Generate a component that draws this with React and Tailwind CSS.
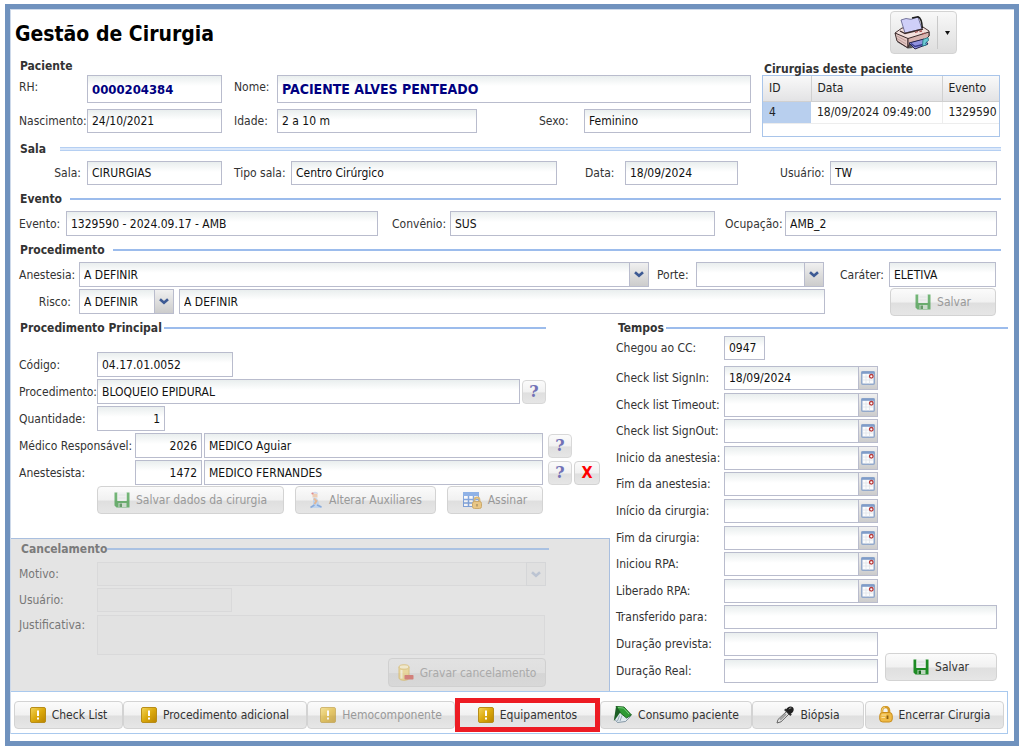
import { useId } from "react"
import clsx from "clsx"

const BEVEL = "bg-[linear-gradient(#fbfbfb_0%,#f1f1f1_50%,#dfdfdf_54%,#e6e6e6_100%)]"

function Field({ label, labelClass, className, ...props }) {
  const id = useId()
  return (
    <>
      <label htmlFor={id} className={clsx("shrink-0 whitespace-nowrap", labelClass)}>
        {label}
      </label>
      <Box id={id} className={className} {...props} />
    </>
  )
}

function Box({ className, ...props }) {
  return (
    <input
      type="text"
      className={clsx(
        "h-6 min-w-0 border border-[#b9bccd] bg-[linear-gradient(#e9eeee,#ffffff_10px)] px-1 text-[#111]",
        className
      )}
      {...props}
    />
  )
}

function Combo({ id, value, className, disabled }) {
  return (
    <span className={clsx("relative flex min-w-0", disabled ? "h-6" : "h-[25px]", className)}>
      <select
        id={id}
        disabled={disabled}
        defaultValue={value}
        className={clsx(
          "w-full appearance-none border px-1",
          disabled ? "border-[#d9d9da] bg-[#e2e2e2]" : "border-[#b9bccd] bg-[linear-gradient(#e9eeee,#ffffff_10px)] text-[#111]"
        )}
      >
        <option>{value}</option>
      </select>
      <span
        className={clsx(
          "pointer-events-none absolute inset-y-0 right-0 flex w-5 items-center justify-center border",
          disabled ? "border-[#d5d6d8] bg-[#e0e0e0] text-[#bcc4d2]" : "border-[#b9bccd] bg-linear-to-b from-[#f0f0f0] to-[#cccccc] text-[#3d5a94]"
        )}
      >
        <svg width="10" height="7" viewBox="0 0 10 7" fill="none" stroke="currentColor" strokeWidth="2.6">
          <path d="M1 1.2 5 4.8 9 1.2" />
        </svg>
      </span>
    </span>
  )
}

function DateField({ label, value = "" }) {
  return (
    <div className="flex items-center">
      <Field label={label} labelClass="w-[108px]" defaultValue={value} className="w-[135px]" />
      <button
        type="button"
        aria-label={"Calendário: " + label}
        className="flex h-6 w-[19px] items-center justify-center border border-l-0 border-[#b9bccd] bg-linear-to-b from-[#f0f0f0] to-[#cccccc]"
      >
        <CalendarIcon />
      </button>
    </div>
  )
}

function Button({ children, className, disabled, icon }) {
  return (
    <button
      type="button"
      disabled={disabled}
      className={clsx(
        "flex h-7 shrink-0 items-center justify-center gap-1.5 whitespace-nowrap rounded-sm border border-[#d3d3d3]",
        BEVEL,
        disabled ? "text-[#999]" : "text-[#333]",
        className
      )}
    >
      {icon && <span className={clsx(disabled && "opacity-60")}>{icon}</span>}
      {children}
    </button>
  )
}

function HelpButton({ label }) {
  return (
    <button
      type="button"
      aria-label={label}
      className={clsx(
        "h-6 w-6 shrink-0 rounded-sm border border-[#d8d8d8] font-['DejaVu_Serif',serif] text-base leading-5 font-bold text-[#7272b6]",
        BEVEL
      )}
    >
      ?
    </button>
  )
}

function Title({ children, className, lineClass = "ml-0.5 h-0.5 bg-[#9cbcec]" }) {
  return (
    <div className={clsx("flex h-4 items-center", className)}>
      <h2 className="text-xs leading-4 font-bold whitespace-nowrap text-[#333]">{children}</h2>
      <div className={clsx("flex-1", lineClass)} />
    </div>
  )
}

function CalendarIcon() {
  return (
    <svg width="14" height="14" viewBox="0 0 14 14">
      <rect x="0.75" y="0.75" width="12.5" height="12.5" rx="1" fill="#fbfcfd" stroke="#93a9cb" strokeWidth="1.5" />
      <path d="M0.500 0.500h13v2.300h-13z" fill="#7f9cc9" />
      <path d="M2 6h10M2 9h10M5 3.500v9M8.500 3.500v9" stroke="#dfe3e9" strokeWidth="0.800" />
      <circle cx="10.300" cy="5.300" r="1.800" fill="#fff" stroke="#b83a3a" strokeWidth="1.300" />
    </svg>
  )
}

function SaveIcon() {
  return (
    <svg width="16" height="16" viewBox="0 0 16 16">
      <path d="M0.500 0.500h3V9h9V0.500h3v15h-13l-2-2z" fill="#1d8b24" />
      <path d="M3.500 0.500h9V9h-9z" fill="#eceeee" />
      <path d="M4.500 3h7M4.500 6h7" stroke="#d6dada" />
      <path d="M4.500 11h8v4h-8z" fill="#bcd6be" />
      <path d="M5.500 11.500h2.500V15H5.500z" fill="#176b1c" />
    </svg>
  )
}

function AlertIcon() {
  return (
    <svg width="16" height="16" viewBox="0 0 16 16">
      <defs>
        <linearGradient id="gold" x1="0" y1="0" x2="1" y2="1">
          <stop offset="0" stopColor="#f3d55b" />
          <stop offset="0.500" stopColor="#dba90c" />
          <stop offset="1" stopColor="#b98400" />
        </linearGradient>
      </defs>
      <rect x="0.5" y="0.5" width="15" height="15" rx="1.500" fill="url(#gold)" stroke="#b88d18" />
      <path d="M7 3.500h2v5.500H7zM7 10.500h2v2H7z" fill="#fff" />
    </svg>
  )
}

function PeopleIcon() {
  return (
    <svg width="14" height="18" viewBox="0 0 14 18">
      <path d="M3.500 2.500h5v4h-5z" fill="#e9b48c" />
      <path d="M3 3C3 0 9 0 9 3L6 2.300z" fill="#b6c6ec" />
      <path d="M4 7c2-1 4-.500 5 2l1 4 3 4H3l1-4z" fill="#a9ccf6" />
      <path d="M5 7.500 7.500 10 5.500 13" stroke="#e39b62" strokeWidth="2" fill="none" />
      <path d="M1.500 16.500 5.500 14M8 14l4.500 2" stroke="#4f86d6" strokeWidth="1.500" />
      <circle cx="3.500" cy="2.500" r="1.100" fill="#d64545" />
    </svg>
  )
}

function SignIcon() {
  return (
    <svg width="19" height="17" viewBox="0 0 19 17">
      <rect x="0.500" y="0.500" width="15" height="14" fill="#fff" stroke="#3c74cf" />
      <path d="M0 0h16v4H0z" fill="#4d86dd" />
      <path d="M1 7.500h14M1 11h14M5.500 4v10M10.500 4v10" stroke="#3c74cf" strokeWidth="1.500" />
      <path d="M11.500 10V8a2.500 2.500 0 0 1 5 0v2" fill="none" stroke="#c8922a" strokeWidth="1.800" />
      <rect x="9.500" y="9.500" width="9" height="7" rx="2" fill="#efb64a" stroke="#bd8520" />
      <path d="M14 12v2.500" stroke="#7d5510" strokeWidth="1.300" />
    </svg>
  )
}

function DatabaseIcon() {
  return (
    <svg width="16" height="17" viewBox="0 0 16 17">
      <path d="M1 3v11c0 3 10 3 10 0V3z" fill="#f0cf6a" stroke="#d6ac3c" />
      <ellipse cx="6" cy="3" rx="5" ry="2.200" fill="#fdf0be" stroke="#d6ac3c" />
      <path d="M3.500 6v8.500" stroke="#fff4cd" strokeWidth="2" />
      <rect x="6.500" y="11" width="9" height="4.500" rx="0.800" fill="#cf3c32" />
    </svg>
  )
}

function BookIcon() {
  return (
    <svg width="19" height="17" viewBox="0 0 19 17">
      <path d="M4 2 2 13.500 4.500 16.500l8-1 5-5z" fill="#dfe8ee" stroke="#6d8494" strokeWidth="0.800" />
      <path d="M3 0.500 11 1l7.500 8-5 3-6-5z" fill="#2f9a35" stroke="#155c1b" strokeWidth="0.900" />
      <path d="M3 0.500 7.500 6 4 11 0.800 15z" fill="#1c5f25" />
      <path d="M6.500 9.500l-2 5.500M9 9.500 7 15" stroke="#8095a6" strokeWidth="0.800" />
      <path d="M5 1.500 10.500 2l5.500 6" fill="none" stroke="#76cf79" />
    </svg>
  )
}

function DropperIcon() {
  return (
    <svg width="18" height="18" viewBox="0 0 18 18">
      <path d="M10.500 5.500 2 13.500 1 17l4-1.200L13 8z" fill="#e6e6e6" stroke="#666" />
      <path d="M10 8 4 13.800" stroke="#a0a0a0" strokeWidth="2" />
      <path d="M8 4 9.800 2.500l6 6L14.300 10z" fill="#333" />
      <path d="M10 4C11 0.800 14.800-.500 16.800 1.300S17.300 7 14 8z" fill="#1f1f1f" />
      <path d="M13 3.200c.600-1 1.500-1.300 2.300-1.200" stroke="#aaa" fill="none" />
    </svg>
  )
}

function LockIcon() {
  return (
    <svg width="14" height="17" viewBox="0 0 14 17">
      <path d="M3 8V4.500a3.500 3.500 0 0 1 7 0V8" fill="none" stroke="#d49b2a" strokeWidth="2.600" />
      <path d="M3 7V4.500a3.500 3.500 0 0 1 3-3.400" fill="none" stroke="#f6dd8a" strokeWidth="0.900" />
      <rect x="0.750" y="6.500" width="12.500" height="9.500" rx="3" fill="#efba45" stroke="#c98d1c" />
      <path d="M2.500 9h5M2.500 11.500h3.500" stroke="#fbe3a0" />
      <path d="M8.500 9.500v3.500" stroke="#8a6012" strokeWidth="1.800" />
    </svg>
  )
}

function PrinterIcon() {
  return (
    <svg width="36" height="34" viewBox="0 0 36 34">
      <path d="M3 26 14 32.500 19 32l-4-5z" fill="#555" />
      <path d="M1 17 8 12l21-1 6 4v5l-5 3-16 4z" fill="#f3e0dd" stroke="#4a3636" />
      <path d="M1 17l13 5.500V32L3 25z" fill="#e3c6c2" stroke="#3b2b2b" />
      <path d="M14 22.500 35 16v4l-3 3-16 4-2 4z" fill="#d8b3af" stroke="#3b2b2b" />
      <path d="M7 4 12 2.500l5 .800L24 1l4 12-17 4z" fill="#cfcff8" stroke="#5a5a88" strokeWidth="0.800" />
      <path d="M18 2l6-1.200c3 1 4 6 4.300 11.200" fill="none" stroke="#1d1d1d" strokeWidth="1.600" />
      <path d="M6 15l5 2.500L29 13" fill="none" stroke="#3b2b2b" strokeWidth="1.300" />
      <path d="M21 16.500l3-1M25.500 15.500l2.500-.500M28 18l3-1" stroke="#a85050" strokeWidth="1.300" />
      <path d="M15 27l15-4 4 5-13 5z" fill="#9193e0" stroke="#26264f" />
      <path d="M17 27.500l4 3 8-2" fill="none" stroke="#383c8a" strokeWidth="1.400" />
      <path d="M29 23.500l5-2 .500 3-3 2.500 1 2-4 1z" fill="#6ccbd4" stroke="#1d6f80" strokeWidth="0.800" />
      <path d="M3 20l9 5M3 22.500l9 5.500" stroke="#b59491" strokeWidth="0.800" />
    </svg>
  )
}

function Header() {
  return (
    <header className="flex h-[45px] items-start justify-between pr-[57px] pl-1">
      <h1 className="pt-2.5 text-[21px] leading-7 font-bold text-black">Gestão de Cirurgia</h1>
      <div className="mt-px flex h-[43px] rounded-sm border border-[#d3d3d3] bg-linear-to-b from-[#f8f8f8] to-[#dedede]">
        <button type="button" aria-label="Imprimir" className="my-1 flex w-[47px] items-center justify-center border-r border-[#c9c9c9] pr-1">
          <PrinterIcon />
        </button>
        <button type="button" aria-label="Opções de impressão" className="flex w-[18px] items-center justify-center">
          <svg width="5" height="4" viewBox="0 0 5 4">
            <path d="M0 0h5L2.500 4z" fill="#111" />
          </svg>
        </button>
      </div>
    </header>
  )
}

function Patient() {
  return (
    <section className="flex gap-[11px] pr-[14px] pl-2">
      <div className="flex-1 pt-[3px]">
        <h2 className="mb-px pl-px text-xs leading-4 font-bold text-[#333]">Paciente</h2>
        <div className="flex items-start">
          <Field label="RH:" labelClass="w-[68px] pt-1" defaultValue="0000204384" className="h-7! w-[135px] text-[13px] font-bold text-[#000080]!" />
          <Field label="Nome:" labelClass="ml-3 w-[43px] pt-1" defaultValue="PACIENTE ALVES PENTEADO" className="h-7! flex-1 text-sm font-bold text-[#000080]!" />
        </div>
        <div className="mt-1.5 flex items-center">
          <Field label="Nascimento:" labelClass="w-[68px]" defaultValue="24/10/2021" className="w-[135px]" />
          <Field label="Idade:" labelClass="ml-3 w-[43px]" defaultValue="2 a 10 m" className="w-[200px]" />
          <Field label="Sexo:" labelClass="ml-[62px] w-[45px]" defaultValue="Feminino" className="flex-1" />
        </div>
      </div>
      <div className="w-[238px] pt-1.5">
        <h2 className="h-3.5 pl-0.5 text-xs leading-4 font-bold whitespace-nowrap text-[#333]">Cirurgias deste paciente</h2>
        <div className="h-[62px] border border-[#a9c5ea]">
          <table className="w-full table-fixed border-collapse text-left text-[#222]">
            <thead>
              <tr className="h-[25px] bg-linear-to-b from-[#f9f9f9] to-[#e3e3e5]">
                <th className="w-12 border-r border-b border-[#d0d0d0] px-1.5 font-normal">ID</th>
                <th className="w-[131px] border-r border-b border-[#d0d0d0] px-1.5 font-normal">Data</th>
                <th className="border-b border-[#d0d0d0] px-1.5 font-normal">Evento</th>
              </tr>
            </thead>
            <tbody>
              <tr className="h-[22px] border-b border-[#ededed]">
                <td className="bg-[#b8cfee] px-1.5">4</td>
                <td className="border-r border-[#ededed] px-1.5 whitespace-nowrap">18/09/2024 09:49:00</td>
                <td className="pl-1.5">1329590</td>
              </tr>
            </tbody>
          </table>
        </div>
      </div>
    </section>
  )
}

function Room() {
  return (
    <section className="pt-1 pr-[13px] pl-[9px]">
      <Title lineClass="ml-3.5 h-1 border-y border-[#b5cff2] bg-[#dbe8fa]">Sala</Title>
      <div className="mt-1 -ml-px flex items-center pr-1">
        <Field label="Sala:" labelClass="w-[68px] pr-1.5 text-right" defaultValue="CIRURGIAS" className="w-[135px]" />
        <Field label="Tipo sala:" labelClass="ml-3 w-[57px]" defaultValue="Centro Cirúrgico" className="flex-1" />
        <Field label="Data:" labelClass="ml-7 w-10" defaultValue="18/09/2024" className="w-[113px]" />
        <Field label="Usuário:" labelClass="ml-[42px] w-[50px]" defaultValue="TW" className="w-[167px]" />
      </div>
    </section>
  )
}

function Event() {
  return (
    <section className="pt-1.5 pr-[13px] pl-[9px]">
      <Title lineClass="ml-2 h-0.5 bg-[#9cbcec]">Evento</Title>
      <div className="mt-1 -ml-px flex items-center pr-1">
        <Field label="Evento:" labelClass="w-[47px]" defaultValue="1329590 - 2024.09.17 - AMB" className="h-[25px]! flex-1" />
        <Field label="Convênio:" labelClass="ml-3.5 w-[58px]" defaultValue="SUS" className="h-[25px]! w-[265px]" />
        <Field label="Ocupação:" labelClass="ml-2.5 w-[60px]" defaultValue="AMB_2" className="h-[25px]! w-[212px]" />
      </div>
    </section>
  )
}

function Procedure() {
  return (
    <section className="pt-1.5 pr-[13px] pl-[9px]">
      <Title lineClass="ml-2 h-0.5 bg-[#9cbcec]">Procedimento</Title>
      <div className="mt-1 -ml-px flex items-center pr-[5px]">
        <label htmlFor="anestesia" className="w-[60px]">Anestesia:</label>
        <Combo id="anestesia" value="A DEFINIR" className="flex-1" />
        <label htmlFor="porte" className="ml-2 w-[39px]">Porte:</label>
        <Combo id="porte" value="" className="w-32" />
        <Field label="Caráter:" labelClass="ml-4 w-[49px]" defaultValue="ELETIVA" className="h-[25px]! w-[107px]" />
      </div>
      <div className="mt-0.5 -ml-px flex h-[25px] items-center pr-[5px]">
        <label htmlFor="risco" className="w-[60px] pr-2 text-right">Risco:</label>
        <Combo id="risco" value="A DEFINIR" className="w-[95px]" />
        <Box aria-label="Descrição do risco" defaultValue="A DEFINIR" className="ml-[5px] h-[25px]! flex-1" />
        <Button disabled icon={<SaveIcon />} className="ml-[65px] w-[106px]">Salvar</Button>
      </div>
    </section>
  )
}

function MainProcedure() {
  return (
    <section className="pl-2">
      <Title className="mr-[64px] pl-px">Procedimento Principal</Title>
      <div className="mt-4 flex flex-col gap-0.5 pr-[10px]">
        <div className="flex items-center">
          <Field label="Código:" labelClass="w-[78px]" defaultValue="04.17.01.0052" className="h-[25px]! w-[136px]" />
        </div>
        <div className="flex items-center pr-[54px]">
          <Field label="Procedimento:" labelClass="w-[78px]" defaultValue="BLOQUEIO EPIDURAL" className="mr-0.5 h-[25px]! flex-1" />
          <HelpButton label="Buscar procedimento" />
        </div>
        <div className="flex items-center">
          <Field label="Quantidade:" labelClass="w-[78px]" defaultValue="1" className="h-[25px]! w-[68px] text-right" />
        </div>
        <div className="flex items-center pr-7">
          <Field label="Médico Responsável:" labelClass="w-[116px]" defaultValue="2026" className="h-[25px]! w-[67px] text-right" />
          <Box aria-label="Nome do médico" defaultValue="MEDICO Aguiar" className="mx-0.5 h-[25px]! flex-1" />
          <span className="ml-[3px] flex"><HelpButton label="Buscar médico" /></span>
        </div>
        <div className="flex items-center">
          <Field label="Anestesista:" labelClass="w-[116px]" defaultValue="1472" className="h-[25px]! w-[67px] text-right" />
          <Box aria-label="Nome do anestesista" defaultValue="MEDICO FERNANDES" className="mx-0.5 h-[25px]! flex-1" />
          <span className="ml-[3px] flex"><HelpButton label="Buscar anestesista" /></span>
          <button
            type="button"
            aria-label="Remover anestesista"
            className={clsx("ml-0.5 h-6 w-[26px] rounded-sm border border-[#d3d3d3] text-base leading-5 font-bold text-[#f00]", BEVEL)}
          >
            X
          </button>
        </div>
      </div>
      <div className="mt-px flex gap-[11px] pl-[78px]">
        <Button disabled icon={<SaveIcon />} className="w-[187px]">Salvar dados da cirurgia</Button>
        <Button disabled icon={<PeopleIcon />} className="w-[141px]">Alterar Auxiliares</Button>
        <Button disabled icon={<SignIcon />} className="w-24">Assinar</Button>
      </div>
    </section>
  )
}

function Cancellation() {
  return (
    <section className="mt-6 border border-b-0 border-l-0 border-[#a9bfdf] bg-[#e4e4e4] pt-0.5 pl-2 text-[#777]">
      <div className="mr-[60px] flex h-4 items-center pl-0.5">
        <h2 className="text-xs leading-4 font-bold text-[#7b7b7b]">Cancelamento</h2>
        <div className="h-0.5 flex-1 bg-[#a9c1e2]" />
      </div>
      <div className="mt-[5px] flex items-center pr-[63px]">
        <label htmlFor="motivo" className="w-[78px]">Motivo:</label>
        <Combo id="motivo" value="" disabled className="flex-1" />
      </div>
      <div className="mt-0.5 flex items-center">
        <label htmlFor="cancelUser" className="w-[78px]">Usuário:</label>
        <input id="cancelUser" type="text" disabled className="h-6 w-[135px] border border-[#d9d9da] bg-[#e2e2e2]" />
      </div>
      <div className="mt-[3px] flex items-start pr-[64px]">
        <label htmlFor="justificativa" className="w-[78px] pt-0.5">Justificativa:</label>
        <textarea id="justificativa" disabled className="h-10 flex-1 resize-none border border-[#d9d9da] bg-[#e2e2e2]" />
      </div>
      <div className="mt-[3px] flex justify-end pr-[63px] pb-1">
        <button
          type="button"
          disabled
          className="flex h-[29px] w-[158px] items-center justify-center gap-1.5 rounded-sm border border-[#d0d0d0] bg-[linear-gradient(#e2e2e2_0%,#dfdfdf_50%,#d5d5d5_54%,#d8d8d8_100%)] whitespace-nowrap text-[#aaa]"
        >
          <span className="opacity-55"><DatabaseIcon /></span>
          Gravar cancelamento
        </button>
      </div>
    </section>
  )
}

function Times() {
  return (
    <section className="flex w-[404px] flex-col pr-[6px] pl-1.5">
      <Title className="pl-0.5">Tempos</Title>
      <div className="mb-1.5 flex items-center">
        <Field label="Chegou ao CC:" labelClass="w-[108px]" defaultValue="0947" className="w-[41px]" />
      </div>
      <div className="flex flex-1 flex-col justify-between pr-[11px] pb-2">
        <DateField label="Check list SignIn:" value="18/09/2024" />
        <DateField label="Check list Timeout:" />
        <DateField label="Check list SignOut:" />
        <DateField label="Inicio da anestesia:" />
        <DateField label="Fim da anestesia:" />
        <DateField label="Início da cirurgia:" />
        <DateField label="Fim da cirurgia:" />
        <DateField label="Iniciou RPA:" />
        <DateField label="Liberado RPA:" />
        <div className="flex items-center">
          <Field label="Transferido para:" labelClass="w-[108px]" className="flex-1" />
        </div>
        <div className="flex items-end justify-between">
          <div className="flex flex-col gap-[3px]">
            <div className="flex items-center">
              <Field label="Duração prevista:" labelClass="w-[108px]" className="w-[154px]" />
            </div>
            <div className="flex items-center">
              <Field label="Duração Real:" labelClass="w-[108px]" className="w-[154px]" />
            </div>
          </div>
          <Button icon={<SaveIcon />} className="mb-0.5 w-28">Salvar</Button>
        </div>
      </div>
    </section>
  )
}

function Toolbar() {
  return (
    <footer className="mr-1.5 mb-[7px] flex h-[43px] items-center border-y border-r border-[#a9c9ee] px-[3px] pt-1">
      <Button icon={<AlertIcon />} className="grow basis-[109px]">Check List</Button>
      <Button icon={<AlertIcon />} className="grow basis-[184px]">Procedimento adicional</Button>
      <Button disabled icon={<AlertIcon />} className="grow basis-[148px]">Hemocomponente</Button>
      <div className="grow basis-[145px] border-[5px] border-[#ed1c24]">
        <Button icon={<AlertIcon />} className="h-6! w-full rounded-none! border-0!">Equipamentos</Button>
      </div>
      <Button icon={<BookIcon />} className="grow basis-[152px]">Consumo paciente</Button>
      <Button icon={<DropperIcon />} className="grow basis-[112px]">Biópsia</Button>
      <Button icon={<LockIcon />} className="ml-px grow basis-[139px]">Encerrar Cirurgia</Button>
    </footer>
  )
}

export default function App() {
  return (
    <div className="bg-white pt-1 pr-[5px] pb-1 pl-[5px] font-['DejaVu_Sans_Condensed','Noto_Sans',sans-serif] text-xs text-[#333]">
      <main className="border-[5px] border-[#7092be]">
        <div className="border-t border-l border-[#cdd9ea]">
          <Header />
          <Patient />
          <Room />
          <Event />
          <Procedure />
          <div className="mt-1.5 flex">
            <div className="flex-1">
              <MainProcedure />
              <Cancellation />
            </div>
            <Times />
          </div>
          <Toolbar />
        </div>
      </main>
    </div>
  )
}
